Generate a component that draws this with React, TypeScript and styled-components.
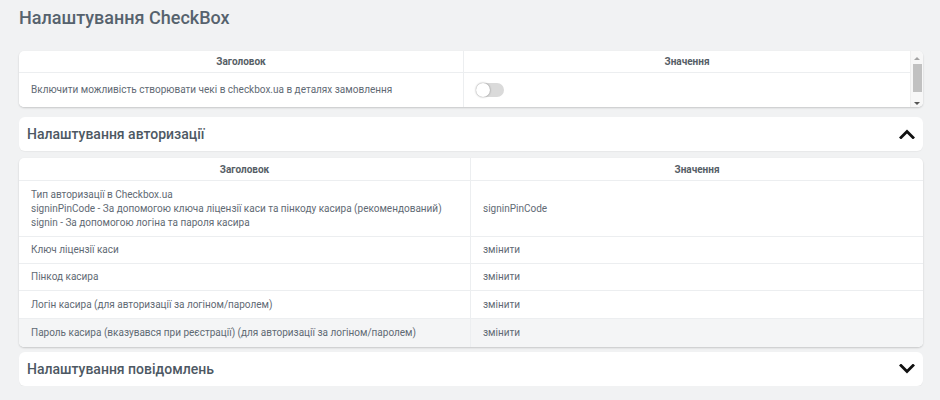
import React from "react";
import styled, { createGlobalStyle } from "styled-components";

const Global = createGlobalStyle`
  html, body { margin: 0; padding: 0; background: #f1f2f3; }
  body { font-family: Roboto, "Noto Sans", Arial, sans-serif; color: #5f6a74; }
  * { box-sizing: border-box; }
`;

const Page = styled.div`
  padding: 7px 17px 0 19px;
  display: flex;
  flex-direction: column;
`;

const Title = styled.h1`
  margin: 0 0 22px 0;
  font-size: 18px;
  line-height: 22px;
  font-weight: 500;
  color: #56626d;
`;

const Card = styled.div<{ $mb?: number }>`
  background: #fff;
  border-radius: 5px;
  box-shadow: 0 1px 2px rgba(0, 0, 0, 0.18);
  margin-bottom: ${(p) => p.$mb ?? 0}px;
  overflow: hidden;
  display: flex;
`;

const Table = styled.div<{ $split: number }>`
  flex: 1;
  display: grid;
  grid-template-columns: ${(p) => p.$split}px 1fr;
`;

const HeadCell = styled.div<{ $h?: number; $divider?: boolean }>`
  height: ${(p) => p.$h ?? 22}px;
  display: flex;
  align-items: center;
  justify-content: center;
  font-size: 10px;
  font-weight: 700;
  color: #565e66;
  border-bottom: 1px solid #eceef0;
  border-right: ${(p) => (p.$divider ? "1px solid #eceef0" : "none")};
`;

const Cell = styled.div<{ $h: number; $alt?: boolean; $right?: boolean; $last?: boolean }>`
  min-height: ${(p) => p.$h}px;
  display: flex;
  flex-direction: column;
  justify-content: center;
  padding: 0 12px;
  font-size: 10px;
  line-height: 14px;
  color: #5f6a74;
  background: ${(p) => (p.$alt ? "#f4f5f6" : "#fff")};
  border-bottom: ${(p) => (p.$last ? "none" : "1px solid #eceef0")};
  border-right: ${(p) => (p.$right ? "none" : "1px solid #eceef0")};
`;

const Toggle = styled.div`
  width: 28px;
  height: 14px;
  border-radius: 7px;
  background: #dadada;
  position: relative;
  &::after {
    content: "";
    position: absolute;
    left: 0;
    top: 0;
    width: 14px;
    height: 14px;
    border-radius: 50%;
    background: #fff;
    box-shadow: 0 0 2px rgba(0, 0, 0, 0.45);
  }
`;

const Scrollbar = styled.div`
  width: 13px;
  display: flex;
  flex-direction: column;
  align-items: center;
  background: #f7f7f7;
  border-left: 1px solid #eee;
  padding: 2px 0;
`;

const Arrow = styled.div<{ $down?: boolean }>`
  width: 0;
  height: 0;
  margin-top: 4px;
  border-left: 3px solid transparent;
  border-right: 3px solid transparent;
  ${(p) =>
    p.$down
      ? "border-top: 3px solid #555;"
      : "border-bottom: 3px solid #a3a3a3; margin-bottom: 4px;"}
`;

const Thumb = styled.div`
  width: 9px;
  height: 28px;
  background: #c1c1c1;
`;

const Spacer = styled.div`
  flex: 1;
`;

const Section = styled.div<{ $mb?: number }>`
  background: #fff;
  border-radius: 6px;
  height: 34px;
  display: flex;
  align-items: center;
  justify-content: space-between;
  padding: 0 8px 0 8px;
  margin-bottom: ${(p) => p.$mb ?? 0}px;
  box-shadow: 0 1px 1px rgba(0, 0, 0, 0.04);
`;

const SectionTitle = styled.div`
  font-size: 14px;
  font-weight: 500;
  color: #4d5863;
`;

const Chevron = ({ up }: { up?: boolean }) => (
  <svg width="16" height="10" viewBox="0 0 16 10">
    <polyline
      points={up ? "2,8.5 8,2.5 14,8.5" : "2,1.5 8,7.5 14,1.5"}
      fill="none"
      stroke="#111"
      strokeWidth="2.8"
      strokeLinecap="square"
    />
  </svg>
);

const rows = [
  { title: ["Ключ ліцензії каси"], value: "змінити", h: 27 },
  { title: ["Пінкод касира"], value: "змінити", h: 27 },
  { title: ["Логін касира (для авторизації за логіном/паролем)"], value: "змінити", h: 28 },
  {
    title: ["Пароль касира (вказувався при реєстрації) (для авторизації за логіном/паролем)"],
    value: "змінити",
    h: 28,
    alt: true,
  },
];

export default function App() {
  return (
    <>
      <Global />
      <Page>
        <Title>Налаштування CheckBox</Title>
        <Card $mb={10}>
          <Table $split={445}>
            <HeadCell $divider>Заголовок</HeadCell>
            <HeadCell>Значення</HeadCell>
            <Cell $h={34} $last>
              Включити можливість створювати чекі в checkbox.ua в деталях замовлення
            </Cell>
            <Cell $h={34} $last $right>
              <Toggle />
            </Cell>
          </Table>
          <Scrollbar>
            <Arrow />
            <Thumb />
            <Spacer />
            <Arrow $down />
          </Scrollbar>
        </Card>
        <Section $mb={7}>
          <SectionTitle>Налаштування авторизації</SectionTitle>
          <Chevron up />
        </Section>
        <Card $mb={5}>
          <Table $split={452}>
            <HeadCell $divider $h={23}>Заголовок</HeadCell>
            <HeadCell $h={23}>Значення</HeadCell>
            <Cell $h={56}>
              <span>Тип авторизації в Checkbox.ua</span>
              <span>signinPinCode - За допомогою ключа ліцензії каси та пінкоду касира (рекомендований)</span>
              <span>signin - За допомогою логіна та пароля касира</span>
            </Cell>
            <Cell $h={56} $right>
              signinPinCode
            </Cell>
            {rows.map((r, i) => (
              <React.Fragment key={i}>
                <Cell $h={r.h} $alt={r.alt} $last={i === rows.length - 1}>
                  {r.title.map((t) => (
                    <span key={t}>{t}</span>
                  ))}
                </Cell>
                <Cell $h={r.h} $alt={r.alt} $right $last={i === rows.length - 1}>
                  {r.value}
                </Cell>
              </React.Fragment>
            ))}
          </Table>
        </Card>
        <Section>
          <SectionTitle>Налаштування повідомлень</SectionTitle>
          <Chevron />
        </Section>
      </Page>
    </>
  );
}
